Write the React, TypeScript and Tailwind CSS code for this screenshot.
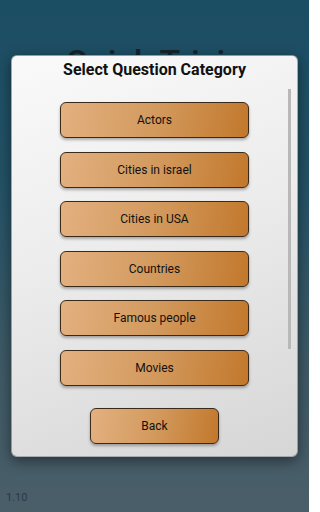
import React from "react";

const cats = ["Actors", "Cities in israel", "Cities in USA", "Countries", "Famous people", "Movies"];

function Btn({ label, w }: { label: string; w: string }) {
  return (
    <div
      className={`${w} h-[36px] flex items-center justify-center rounded-[6px] border border-[#3a2a1a] bg-[linear-gradient(100deg,#e3b080_0%,#d39a5e_50%,#c2782c_100%)] shadow-[0_2px_3px_rgba(0,0,0,0.3)] text-[12px] text-[#111] font-normal`}
    >
      {label}
    </div>
  );
}

export default function App() {
  return (
    <div
      className="relative w-[309px] h-[512px] overflow-hidden flex flex-col bg-[linear-gradient(180deg,#1b4d63_0%,#235266_35%,#3e5a66_70%,#4a5e68_100%)]"
      style={{ fontFamily: "Roboto, 'Noto Sans', sans-serif" }}
    >
      <div className="pt-[42px] flex justify-center text-[34px] font-medium text-[#16242c] leading-[40px]">Quick Trivia</div>
      <div className="flex-1" />
      <div className="pl-[6px] pb-[8px] text-[11px] leading-[13px] text-[#2a3a42]">1.10</div>
      <div className="absolute left-[11px] top-[55px] w-[287px] h-[402px] rounded-[6px] bg-[linear-gradient(160deg,#fafafa_0%,#ececec_45%,#d6d6d6_100%)] shadow-[0_4px_14px_rgba(0,0,0,0.45)] border border-[#2a3a44]/40">
        <div className="text-center text-[16px] font-bold text-[#111] pt-[4px] leading-[20px]">Select Question Category</div>
        <div className="absolute right-[6px] top-[33px] w-[3px] h-[260px] bg-[#b8b8b8]" />
        <div className="flex flex-col items-center gap-[13.5px] pt-[22px]">
          {cats.map((c) => (
            <Btn key={c} label={c} w="w-[189px]" />
          ))}
        </div>
        <div className="flex justify-center pt-[22px]">
          <Btn label="Back" w="w-[129px]" />
        </div>
      </div>
    </div>
  );
}
